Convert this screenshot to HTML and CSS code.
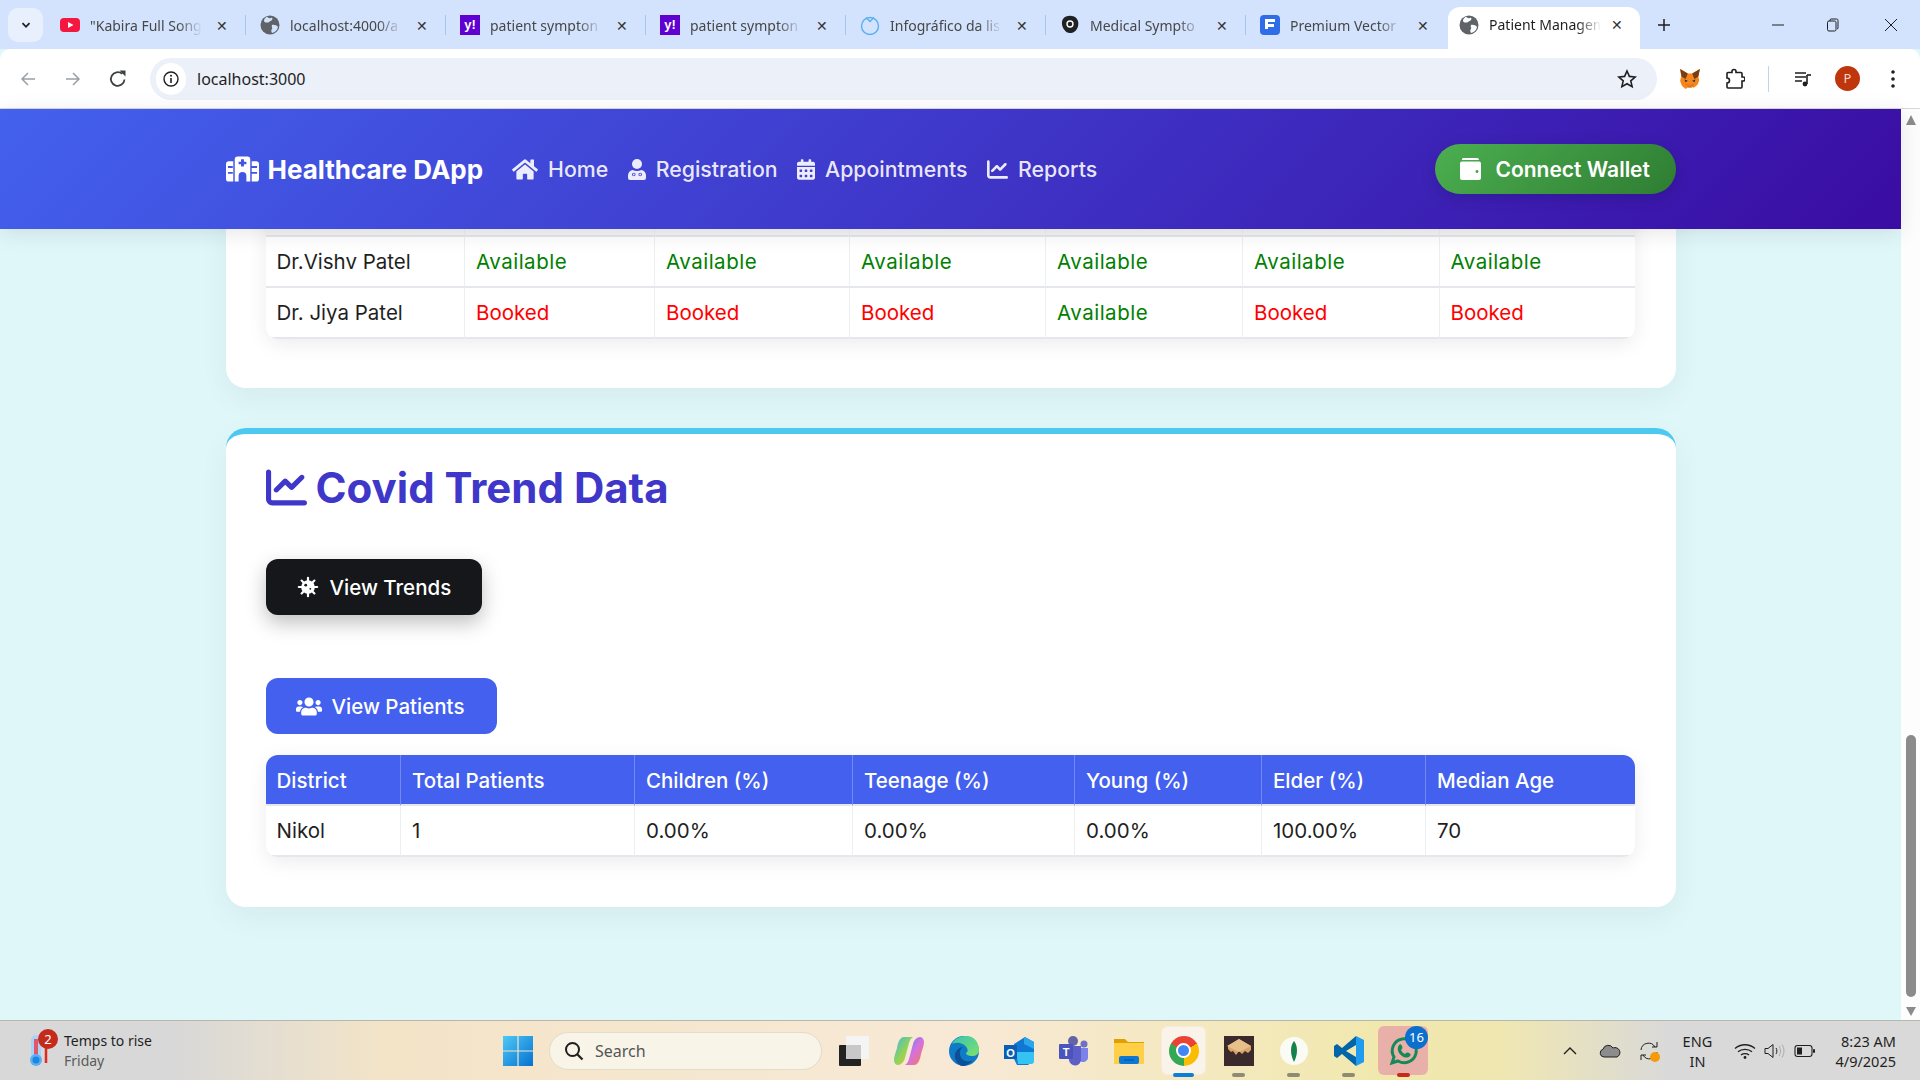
FILE: index.html
```html
<!DOCTYPE html>
<html lang="en">
<head>
  <meta charset="UTF-8" />
  <meta name="viewport" content="width=device-width, initial-scale=1.0" />
  <title>Patient Management</title>
  <link rel="stylesheet" href="styles.css">
</head>
<body>
  <!-- browser tabs -->
  <div class="tabstrip">
    <div class="tab-search"><svg viewBox="0 0 12 12" class="ico-12"><path d="M2.5 4.2 6 7.8l3.5-3.6" fill="none" stroke="#1f1f1f" stroke-width="1.8"/></svg></div>
    <div class="tab">
      <svg viewBox="0 0 20 20" class="favicon"><rect x="0" y="3" width="20" height="14" rx="4" fill="#f4173f"/><path d="M8 7l5.500 3L8 13z" fill="#fff"/></svg>
      <span class="tab-title">"Kabira Full Song</span><span class="tab-x">✕</span>
    </div>
    <div class="tab">
      <svg viewBox="0 0 20 20" class="favicon"><circle cx="10" cy="10" r="9.500" fill="#5f6368"/><path d="M7 1.500c1 2 4 2 5 1 1 1.500 0 3-1.500 3.500S9 8 6 7.500 3.500 4 7 1.500zM12 10c2-.5 5 .5 6 2-.5 3-3 5.500-6 6-1-2-1-3 0-4s-1-2 0-4z" fill="#d3e3fd"/></svg>
      <span class="tab-title">localhost:4000/a</span><span class="tab-x">✕</span>
    </div>
    <div class="tab">
      <span class="favicon yahoo">y!</span>
      <span class="tab-title">patient sympton</span><span class="tab-x">✕</span>
    </div>
    <div class="tab">
      <span class="favicon yahoo">y!</span>
      <span class="tab-title">patient sympton</span><span class="tab-x">✕</span>
    </div>
    <div class="tab">
      <svg viewBox="0 0 20 20" class="favicon"><circle cx="10" cy="11" r="8.500" fill="none" stroke="#5aaef0" stroke-width="1.400"/><path d="M6 2.500l4 4 4-4" fill="none" stroke="#5aaef0" stroke-width="1.400"/></svg>
      <span class="tab-title">Infográfico da lis</span><span class="tab-x">✕</span>
    </div>
    <div class="tab">
      <svg viewBox="0 0 20 20" class="favicon"><path d="M3 4c2-3 7-4 11-2.500 4 2 5 6 4 10-1 3-3 6-7 6.500-3 .5-5-1-6.500-3C2 12 1 7 3 4z" fill="#202124"/><circle cx="10" cy="9" r="3" fill="none" stroke="#fff" stroke-width="1.400"/></svg>
      <span class="tab-title">Medical Sympto</span><span class="tab-x">✕</span>
    </div>
    <div class="tab">
      <svg viewBox="0 0 20 20" class="favicon"><rect width="20" height="20" rx="4" fill="#2f6de8"/><path d="M5 4h10v3H8v2h6v3H8v2H5z" fill="#fff"/></svg>
      <span class="tab-title">Premium Vector</span><span class="tab-x">✕</span>
    </div>
    <div class="tab tab-active">
      <svg viewBox="0 0 20 20" class="favicon"><circle cx="10" cy="10" r="9.500" fill="#5f6368"/><path d="M7 1.500c1 2 4 2 5 1 1 1.500 0 3-1.500 3.500S9 8 6 7.500 3.500 4 7 1.500zM12 10c2-.5 5 .5 6 2-.5 3-3 5.500-6 6-1-2-1-3 0-4s-1-2 0-4z" fill="#fff"/></svg>
      <span class="tab-title">Patient Managem</span><span class="tab-x">✕</span>
    </div>
    <div class="tab-plus"><svg viewBox="0 0 14 14" class="ico-14"><path d="M7 1v12M1 7h12" stroke="#1f1f1f" stroke-width="1.500"/></svg></div>
    <div class="win-controls">
      <svg viewBox="0 0 14 14" class="ico-14"><path d="M1 7h12" stroke="#1f1f1f" stroke-width="1"/></svg>
      <svg viewBox="0 0 14 14" class="ico-14"><rect x="1.500" y="3" width="8.500" height="10" rx="1.500" fill="none" stroke="#1f1f1f"/><path d="M4 3V2.200C4 1.500 4.500 1 5.200 1h5.300c1 0 1.500.5 1.500 1.500V10c0 .6-.4 1-1 1" fill="none" stroke="#1f1f1f"/></svg>
      <svg viewBox="0 0 14 14" class="ico-14"><path d="M1 1l12 12M13 1L1 13" stroke="#1f1f1f" stroke-width="1"/></svg>
    </div>
  </div>

  <!-- address bar -->
  <div class="toolbar">
    <div class="tool-btn"><svg viewBox="0 0 16 16" class="ico-16"><path d="M15 8H2M8 2 2 8l6 6" fill="none" stroke="#9aa0a6" stroke-width="1.500"/></svg></div>
    <div class="tool-btn"><svg viewBox="0 0 16 16" class="ico-16"><path d="M1 8h13M8 2l6 6-6 6" fill="none" stroke="#9aa0a6" stroke-width="1.500"/></svg></div>
    <div class="tool-btn"><svg viewBox="0 0 20 20" class="ico-20"><path d="M16.500 10.500a6.800 6.800 0 1 1-2.300-5.600" fill="none" stroke="#3c4043" stroke-width="1.800"/><path d="M11.500 1.500h6v6z" fill="#3c4043"/></svg></div>
    <div class="addressbar">
      <div class="site-info"><svg viewBox="0 0 16 16" class="ico-16"><circle cx="8" cy="8" r="7" fill="none" stroke="#1f1f1f" stroke-width="1.400"/><path d="M8 7v5" stroke="#1f1f1f" stroke-width="1.600"/><circle cx="8" cy="4.800" r="1" fill="#1f1f1f"/></svg></div>
      <span class="url">localhost:3000</span>
      <svg viewBox="0 0 20 20" class="ico-20 star"><path d="M10 2l2.400 5.400 5.800.6-4.400 3.900 1.300 5.700L10 14.700l-5.100 2.900 1.300-5.700L1.800 8l5.800-.6z" fill="none" stroke="#1f1f1f" stroke-width="1.600"/></svg>
    </div>
    <div class="tool-right">
      <div class="tool-btn"><svg viewBox="0 0 20 20" class="ico-22"><path d="M1 1l7 4h4l7-4-1.500 7 1 3-1.500 4-3.500 3-3-1.500h-1L6 19l-3.500-3L1 11.500l1-3.500z" fill="#f6851b"/><path d="M1 1l7 4-2 5-3.500-2zM19 1l-7 4 2 5 3.500-2z" fill="#763d16"/><path d="M6 14l4 1.500 4-1.500-2.500 4h-3z" fill="#e4761b"/><path d="M5 10.500l3 1-2 1.500zM15 10.500l-3 1 2 1.500z" fill="#233447"/></svg></div>
      <div class="tool-btn"><svg viewBox="0 0 20 22" class="puzzle"><path d="M3 4.500h4V3.500a2 2 0 0 1 4 0v1h5a1 1 0 0 1 1 1V9h1a2 2 0 0 1 0 4h-1v6a1 1 0 0 1-1 1H3a1 1 0 0 1-1-1v-4a2.500 2.500 0 0 0 0-5V5.500a1 1 0 0 1 1-1z" fill="none" stroke="#1f1f1f" stroke-width="1.600"/></svg></div>
      <div class="tool-sep"></div>
      <div class="tool-btn"><svg viewBox="0 0 20 20" class="ico-20"><path d="M2 4h11M2 8h11M2 12h7" stroke="#1f1f1f" stroke-width="1.600"/><path d="M14 6v9" stroke="#1f1f1f" stroke-width="1.600"/><path d="M14 6h4" stroke="#1f1f1f" stroke-width="1.600"/><circle cx="12" cy="15" r="2.400" fill="#1f1f1f"/></svg></div>
      <div class="tool-btn"><span class="avatar">P</span></div>
      <div class="tool-btn"><svg viewBox="0 0 4 18" class="dots"><circle cx="2" cy="2" r="1.800" fill="#1f1f1f"/><circle cx="2" cy="9" r="1.800" fill="#1f1f1f"/><circle cx="2" cy="16" r="1.800" fill="#1f1f1f"/></svg></div>
    </div>
  </div>

  <div class="window">
    <div class="page">
      <nav class="navbar">
        <div class="nav-inner">
          <a class="brand">
            <svg viewBox="0 0 34 26" class="brand-icon"><path fill="#fff" fill-rule="evenodd" d="M12 0h10a3 3 0 0 1 3 3v23h-4v-6a4 4 0 0 0-8 0v6H9V3a3 3 0 0 1 3-3zm3.500 3v2.500H13v2.500h2.500v2.500h3V8H21V5.500h-2.500V3zM3 5h4.500v21H3a3 3 0 0 1-3-3V8a3 3 0 0 1 3-3zm-1 5v2h5v-2zm0 6v2h5v-2zM26.500 5H31a3 3 0 0 1 3 3v15a3 3 0 0 1-3 3h-4.500zm0 5v2h5.500v-2zm0 6v2h5.500v-2z"/></svg>
            <span>Healthcare DApp</span>
          </a>
          <a class="nav-link">
            <svg viewBox="0 0 576 512" class="nav-icon home"><path fill="currentColor" d="M280.370 148.260L96 300.110V464a16 16 0 0 0 16 16l112.060-.29a16 16 0 0 0 15.920-16V368a16 16 0 0 1 16-16h64a16 16 0 0 1 16 16v95.640a16 16 0 0 0 16 16.050L464 480a16 16 0 0 0 16-16V300L295.670 148.260a12.190 12.190 0 0 0-15.300 0zM571.600 251.470L488 182.560V44.050a12 12 0 0 0-12-12h-56a12 12 0 0 0-12 12v72.610L318.470 43a48 48 0 0 0-61 0L4.340 251.470a12 12 0 0 0-1.600 16.900l25.500 31A12 12 0 0 0 45.150 301l235.220-193.740a12.190 12.190 0 0 1 15.300 0L530.900 301a12 12 0 0 0 16.900-1.600l25.500-31a12 12 0 0 0-1.700-16.930z"/></svg>
            <span>Home</span>
          </a>
          <a class="nav-link">
            <svg viewBox="0 0 18 21" class="nav-icon user"><circle cx="9" cy="5" r="5" fill="currentColor"/><path fill="currentColor" fill-rule="evenodd" d="M4.500 11c3 1.300 6 1.300 9 0 3 .5 4.500 3 4.500 5.500V19a2 2 0 0 1-2 2H2a2 2 0 0 1-2-2v-2.500C0 14 1.500 11.500 4.500 11zM4 15.500a1.800 1.800 0 1 0 3.600 0 1.800 1.800 0 1 0-3.600 0zm.9 0a.9.9 0 1 1 1.800 0 .9.900 0 1 1-1.800 0zm5.500 0a1.800 1.800 0 1 0 3.600 0 1.800 1.800 0 1 0-3.600 0zm.9 0a.9.900 0 1 1 1.800 0 .9.900 0 1 1-1.800 0z"/></svg>
            <span>Registration</span>
          </a>
          <a class="nav-link">
            <svg viewBox="0 0 448 512" class="nav-icon cal"><path fill="currentColor" d="M0 464c0 26.500 21.500 48 48 48h352c26.500 0 48-21.500 48-48V192H0v272zm320-196c0-6.600 5.400-12 12-12h40c6.600 0 12 5.400 12 12v40c0 6.600-5.400 12-12 12h-40c-6.600 0-12-5.400-12-12v-40zm0 128c0-6.600 5.400-12 12-12h40c6.600 0 12 5.400 12 12v40c0 6.600-5.400 12-12 12h-40c-6.600 0-12-5.400-12-12v-40zM192 268c0-6.600 5.400-12 12-12h40c6.600 0 12 5.400 12 12v40c0 6.600-5.400 12-12 12h-40c-6.600 0-12-5.400-12-12v-40zm0 128c0-6.600 5.400-12 12-12h40c6.600 0 12 5.400 12 12v40c0 6.600-5.400 12-12 12h-40c-6.600 0-12-5.400-12-12v-40zM64 268c0-6.600 5.400-12 12-12h40c6.600 0 12 5.400 12 12v40c0 6.600-5.400 12-12 12H76c-6.600 0-12-5.400-12-12v-40zm0 128c0-6.600 5.400-12 12-12h40c6.600 0 12 5.400 12 12v40c0 6.600-5.400 12-12 12H76c-6.600 0-12-5.400-12-12v-40zM400 64h-48V16c0-8.800-7.200-16-16-16h-32c-8.800 0-16 7.200-16 16v48H160V16c0-8.800-7.200-16-16-16h-32c-8.800 0-16 7.200-16 16v48H48C21.500 64 0 85.500 0 112v48h448v-48c0-26.500-21.500-48-48-48z"/></svg>
            <span>Appointments</span>
          </a>
          <a class="nav-link">
            <svg viewBox="0 0 512 512" class="nav-icon chart"><path fill="currentColor" d="M64 64c0-17.700-14.300-32-32-32S0 46.300 0 64V400c0 44.200 35.800 80 80 80H480c17.700 0 32-14.300 32-32s-14.300-32-32-32H80c-8.800 0-16-7.200-16-16V64zm406.600 86.600c12.500-12.500 12.500-32.800 0-45.300s-32.800-12.500-45.300 0L320 210.700l-57.400-57.400c-12.500-12.500-32.800-12.500-45.300 0l-112 112c-12.500 12.500-12.500 32.800 0 45.300s32.800 12.500 45.300 0L240 221.300l57.400 57.400c12.500 12.500 32.800 12.500 45.300 0l128-128z"/></svg>
            <span>Reports</span>
          </a>
          <button class="wallet-btn">
            <svg viewBox="0 0 21 22" class="wallet-icon"><path fill="#fff" fill-rule="evenodd" d="M3 0h14a2 2 0 0 1 2 2H2a2 2 0 0 1 1-2zM2 3.500h17a2 2 0 0 1 2 2V20a2 2 0 0 1-2 2H2a2 2 0 0 1-2-2V5.500a2 2 0 0 1 2-2zM17 12a1.500 1.500 0 1 0 .01 0z"/></svg>
            <span>Connect Wallet</span>
          </button>
        </div>
      </nav>

      <main class="content">
        <section class="card card-clipped">
          <table class="data-table schedule">
            <colgroup><col><col><col><col><col><col><col></colgroup>
            <tbody>
              <tr class="row-cut"><td></td><td></td><td></td><td></td><td></td><td></td><td></td></tr>
              <tr>
                <td>Dr.Vishv Patel</td>
                <td class="free">Available</td><td class="free">Available</td><td class="free">Available</td>
                <td class="free">Available</td><td class="free">Available</td><td class="free">Available</td>
              </tr>
              <tr>
                <td>Dr. Jiya Patel</td>
                <td class="taken">Booked</td><td class="taken">Booked</td><td class="taken">Booked</td>
                <td class="free">Available</td><td class="taken">Booked</td><td class="taken">Booked</td>
              </tr>
            </tbody>
          </table>
        </section>

        <section class="card card-accent">
          <h2 class="card-title">
            <svg viewBox="0 0 512 512" class="title-icon"><path fill="currentColor" d="M64 64c0-17.700-14.300-32-32-32S0 46.300 0 64V400c0 44.200 35.800 80 80 80H480c17.700 0 32-14.300 32-32s-14.300-32-32-32H80c-8.800 0-16-7.200-16-16V64zm406.600 86.600c12.500-12.500 12.500-32.800 0-45.300s-32.800-12.500-45.300 0L320 210.700l-57.400-57.400c-12.500-12.500-32.800-12.500-45.300 0l-112 112c-12.500 12.500-12.500 32.800 0 45.300s32.800 12.500 45.300 0L240 221.300l57.400 57.400c12.500 12.500 32.800 12.500 45.300 0l128-128z"/></svg>
            <span>Covid Trend Data</span>
          </h2>
          <button class="btn btn-dark">
            <svg viewBox="0 0 24 24" class="virus-icon">
              <g stroke="#fff" stroke-width="2.400" stroke-linecap="round"><path d="M12 2v20M2 12h20M5 5l14 14M19 5 5 19"/></g>
              <circle cx="12" cy="12" r="7.500" fill="#fff"/>
              <circle cx="9.500" cy="10" r="1.500" fill="#16171b"/><circle cx="14.500" cy="14" r="1" fill="#16171b"/>
            </svg>
            <span>View Trends</span>
          </button>
          <button class="btn btn-blue">
            <svg viewBox="0 0 640 512" class="users-icon"><path fill="#fff" d="M96 224c35.300 0 64-28.700 64-64s-28.700-64-64-64-64 28.700-64 64 28.700 64 64 64zm448 0c35.300 0 64-28.700 64-64s-28.700-64-64-64-64 28.700-64 64 28.700 64 64 64zm32 32h-64c-17.600 0-33.500 7.100-45.100 18.600 40.300 22.100 68.900 62 75.100 109.400h66c17.700 0 32-14.300 32-32v-32c0-35.300-28.700-64-64-64zm-256 0c61.900 0 112-50.100 112-112S381.900 32 320 32 208 82.100 208 144s50.100 112 112 112zm76.800 32h-8.300c-20.800 10-43.900 16-68.500 16s-47.600-6-68.500-16h-8.300C179.600 288 128 339.600 128 403.200V432c0 26.500 21.500 48 48 48h288c26.500 0 48-21.500 48-48v-28.800c0-63.600-51.600-115.200-115.200-115.200zm-223.700-13.400C161.500 263.100 145.600 256 128 256H64c-35.300 0-64 28.700-64 64v32c0 17.700 14.300 32 32 32h65.900c6.300-47.400 34.900-87.300 75.200-109.400z"/></svg>
            <span>View Patients</span>
          </button>
          <table class="data-table trends">
            <colgroup><col><col><col><col><col><col><col></colgroup>
            <thead>
              <tr><th>District</th><th>Total Patients</th><th>Children (%)</th><th>Teenage (%)</th><th>Young (%)</th><th>Elder (%)</th><th>Median Age</th></tr>
            </thead>
            <tbody>
              <tr><td>Nikol</td><td>1</td><td>0.00%</td><td>0.00%</td><td>0.00%</td><td>100.00%</td><td>70</td></tr>
            </tbody>
          </table>
        </section>
      </main>
    </div>

    <div class="scrollbar">
      <div class="arrow-up"></div>
      <div class="thumb"></div>
      <div class="arrow-down"></div>
    </div>
  </div>

  <!-- windows taskbar -->
  <footer class="taskbar">
    <div class="weather">
      <svg viewBox="0 0 24 36" class="thermo">
        <rect x="3" y="2" width="10" height="26" rx="5" fill="#a9d4f5"/>
        <rect x="6" y="6" width="4" height="20" fill="#e0566a"/>
        <circle cx="8" cy="27" r="6" fill="#5ab0f0"/><circle cx="8" cy="27" r="3.500" fill="#1c86e0"/>
        <path d="M18 12v18" stroke="#e02a1f" stroke-width="2.500"/>
      </svg>
      <span class="weather-badge">2</span>
      <div class="weather-text"><span>Temps to rise</span><span class="weather-day">Friday</span></div>
    </div>

    <div class="task-group">
      <svg viewBox="0 0 30 30" class="win-logo">
        <defs><linearGradient id="winGrad" x1="0" y1="0" x2="1" y2="1"><stop offset="0" stop-color="#4fc8f7"/><stop offset="1" stop-color="#0571d0"/></linearGradient></defs>
        <path fill="url(#winGrad)" d="M0 0h14.400v14.400H0zM15.600 0H30v14.400H15.600zM0 15.600h14.400V30H0zM15.600 15.600H30V30H15.600z"/>
      </svg>
      <div class="search-box">
        <svg viewBox="0 0 20 20" class="ico-20"><circle cx="8.500" cy="8.500" r="6.500" fill="none" stroke="#1f1f1f" stroke-width="2"/><path d="M13 13l5.500 5.500" stroke="#1f1f1f" stroke-width="2.200"/></svg>
        <span>Search</span>
      </div>
      <div class="task-item">
        <svg viewBox="0 0 30 30" class="app-icon"><rect x="7" y="0" width="23" height="23" rx="1" fill="#f4f4f4"/><rect x="0" y="9" width="22" height="21" rx="1" fill="#222"/><rect x="7" y="9" width="15" height="14" fill="#c8c8c8"/></svg>
      </div>
      <div class="task-item">
        <svg viewBox="0 0 30 30" class="app-icon">
          <defs><linearGradient id="copA" x1="0" y1="0" x2="1" y2="1"><stop offset="0" stop-color="#3fb6e8"/><stop offset=".5" stop-color="#8ed35b"/><stop offset="1" stop-color="#f4c430"/></linearGradient><linearGradient id="copB" x1="0" y1="0" x2="1" y2="1"><stop offset="0" stop-color="#3c8ef0"/><stop offset=".5" stop-color="#d670e0"/><stop offset="1" stop-color="#f47b4c"/></linearGradient></defs>
          <path fill="url(#copA)" d="M10 1h9c-2 1-3 3-4 6l-4 15c-1 4-4 7-7 7-2 0-4-2-4-5 0-4 2-8 3-12C4 6 6 1 10 1z"/>
          <path fill="url(#copB)" d="M20 29h-9c2-1 3-3 4-6l4-15c1-4 4-7 7-7 2 0 4 2 4 5 0 4-2 8-3 12-1 6-3 11-7 11z"/>
        </svg>
      </div>
      <div class="task-item">
        <svg viewBox="0 0 30 30" class="app-icon">
          <defs><linearGradient id="edgeA" x1="0" y1="0" x2="1" y2="1"><stop offset="0" stop-color="#36c6b0"/><stop offset="1" stop-color="#7fe06a"/></linearGradient></defs>
          <circle cx="15" cy="15" r="15" fill="#0f7bc6"/>
          <path fill="url(#edgeA)" d="M3 8C6 2 12 0 17 0c8 0 13 6 13 14 0 4-3 6-7 6-3 0-6-1-6-3 2-1 2-3 1-5-2-4-9-7-15-4z"/>
          <path fill="#0c4f96" d="M24 24c-3 4-7 6-11 6 -4-1-8-6-7-12 1-4 5-7 8-7-4 3-4 8-1 12 3 3 8 3 11 1z"/>
        </svg>
      </div>
      <div class="task-item">
        <svg viewBox="0 0 30 30" class="app-icon"><path fill="#0f78d4" d="M10 8l11-7 9 5v18l-6 5H13l-3-6z"/><path fill="#2aa6ea" d="M20 1l10 5v7l-10-5z"/><path fill="#35c3f3" d="M12 16h18v9a3 3 0 0 1-3 3H14z"/><rect x="0" y="9" width="13" height="14" fill="#0a5fb4"/><text x="6.500" y="20.500" class="mini-letter">O</text></svg>
      </div>
      <div class="task-item">
        <svg viewBox="0 0 30 30" class="app-icon"><circle cx="14" cy="5" r="5" fill="#6264a7"/><circle cx="25" cy="8" r="3.500" fill="#6d70c4"/><path fill="#7b83eb" d="M19 12h10v10a5 5 0 0 1-8 3z"/><path fill="#5b5fc7" d="M8 10h14v13a6 6 0 0 1-12 1z"/><rect x="0" y="8" width="14" height="15" rx="1" fill="#4b53bc"/><text x="7" y="20" class="mini-letter">T</text></svg>
      </div>
      <div class="task-item">
        <svg viewBox="0 0 30 30" class="app-icon"><path fill="#e0a100" d="M0 3h11l3 3h16v6H0z"/><path fill="#ffcf48" d="M0 7h30v21H0z"/><rect x="5" y="20" width="20" height="8" rx="2" fill="#0f78d4"/><path d="M10 24h10" stroke="#0a4f96" stroke-width="1"/></svg>
      </div>
      <div class="task-item task-active">
        <span class="active-bg"></span>
        <span class="chrome"><span class="chrome-dot"></span></span>
        <span class="indicator ind-blue"></span>
      </div>
      <div class="task-item">
        <svg viewBox="0 0 30 30" class="app-icon"><rect width="30" height="30" fill="#3a2a2c"/><path fill="#d9a569" d="M15 3l12 7v4l-3 3-3-2-3 3-3-3-3 4-3-4-2 1-3-3v-3z"/><path fill="#e8c08a" d="M15 3l12 7-12 6-12-6z"/></svg>
        <span class="indicator"></span>
      </div>
      <div class="task-item">
        <svg viewBox="0 0 30 30" class="app-icon"><circle cx="15" cy="15" r="14" fill="#fbfbf5"/><path fill="#13814a" d="M15 5c4 5 4 13 0 21-4-8-4-16 0-21z"/></svg>
        <span class="indicator"></span>
      </div>
      <div class="task-item">
        <svg viewBox="0 0 30 30" class="app-icon"><path fill="#1f9cf0" d="M22 0l8 4v22l-8 4z"/><path fill="#0065a9" d="M22 0v9L12 15l10 6v9L8 18l-5 4-3-2v-10l3-2 5 4z"/></svg>
        <span class="indicator"></span>
      </div>
      <div class="task-item task-alert">
        <span class="alert-bg"></span>
        <svg viewBox="0 0 30 30" class="app-icon"><path fill="none" stroke="#148a5a" stroke-width="3" d="M3 27l2-6A12 12 0 1 1 9 25z"/><path fill="#148a5a" d="M10 9c1-1 2-1 3 1s0 3-1 4c1 2 2 3 4 4 1-1 2-2 4-1s2 2 1 3c-2 2-5 2-8 0s-6-7-3-11z"/></svg>
        <span class="wa-badge">16</span>
        <span class="indicator ind-red"></span>
      </div>
    </div>

    <div class="tray">
      <svg viewBox="0 0 14 8" class="tray-chevron"><path d="M1 7l6-6 6 6" fill="none" stroke="#1f1f1f" stroke-width="1.400"/></svg>
      <svg viewBox="0 0 22 14" class="tray-cloud"><path fill="#8c8c8c" stroke="#1f1f1f" d="M5 13a4 4 0 0 1-1-7.800A5.500 5.500 0 0 1 14 4a4.500 4.500 0 0 1 4 9z"/></svg>
      <div class="tray-sync">
        <svg viewBox="0 0 20 20" class="ico-20"><path d="M2 9a7.500 7.500 0 0 1 14-3M18 1v5h-5M18 11a7.500 7.500 0 0 1-14 3M2 19v-5h5" fill="none" stroke="#1f1f1f" stroke-width="1"/></svg>
        <span class="sync-dot"></span>
      </div>
      <div class="tray-lang"><span>ENG</span><span>IN</span></div>
      <svg viewBox="0 0 22 16" class="tray-wifi"><path d="M1 5.500c5.500-5 14.500-5 20 0M4 8.800c3.800-3.300 10.200-3.300 14 0M7 12c2.200-1.800 5.800-1.800 8 0" fill="none" stroke="#1f1f1f" stroke-width="1.300"/><circle cx="11" cy="14.500" r="1.400" fill="#1f1f1f"/></svg>
      <svg viewBox="0 0 22 16" class="tray-sound"><path d="M1 5.500h3L9 1.500v13l-5-4H1z" fill="none" stroke="#1f1f1f" stroke-width="1"/><path d="M12 5c1.200 1.800 1.200 4.200 0 6" fill="none" stroke="#1f1f1f"/><path d="M15 3c2 3 2 7 0 10M18 1.500c2.600 4 2.600 9 0 13" fill="none" stroke="#aaa"/></svg>
      <svg viewBox="0 0 22 14" class="tray-batt"><rect x="1" y="1.500" width="17" height="11" rx="2.500" fill="none" stroke="#1f1f1f" stroke-width="1.100"/><rect x="3" y="3.500" width="5" height="7" fill="#1f1f1f"/><rect x="19" y="5" width="2" height="4" rx="1" fill="#1f1f1f"/></svg>
      <div class="tray-clock"><span>8:23 AM</span><span>4/9/2025</span></div>
    </div>
  </footer>
</body>
</html>
```

FILE: styles.css
```css
* {
  box-sizing: border-box;
}

html, body {
  height: 100%;
}

body {
  margin: 0;
  display: flex;
  flex-direction: column;
  overflow: hidden;
  font-family: "Noto Sans", sans-serif;
  color: #1f1f1f;
  background: #e0f7fa;
}

.ico-12 { width: 12px; height: 12px; }
.ico-14 { width: 14px; height: 14px; }
.ico-16 { width: 16px; height: 16px; }
.ico-20 { width: 20px; height: 20px; }
.ico-22 { width: 22px; height: 22px; }

/* browser tabs */
.tabstrip {
  height: 49px;
  flex: none;
  display: flex;
  align-items: flex-end;
  background: #d3e3fd;
}

.tab-search {
  width: 35px;
  height: 34px;
  margin: 0 3px 7px 8px;
  display: flex;
  align-items: center;
  justify-content: center;
  border-radius: 10px;
  background: #e9f0fd;
}

.tab {
  width: 200px;
  height: 20px;
  margin-bottom: 14px;
  padding: 0 16px 0 14px;
  display: flex;
  align-items: center;
  border-right: 1px solid #a9c4ee;
  font-size: 14px;
  color: #474747;
}

.tab:nth-child(8) {
  border-right: none;
}

.tab-active {
  width: 192px;
  height: 42px;
  margin-bottom: 0;
  margin-left: 2px;
  padding: 0 16px 7px 11px;
  border: none;
  border-radius: 12px 12px 0 0;
  background: #fff;
  color: #1f1f1f;
}

.favicon {
  width: 20px;
  height: 20px;
  flex: none;
  margin-right: 10px;
}

.yahoo {
  display: block;
  background: #5f01d1;
  color: #fff;
  font: bold 13px/19px "Liberation Sans", sans-serif;
  text-align: center;
}

/* titles fade out before the close button, as chrome does */
.tab-title {
  flex: 1;
  min-width: 0;
  white-space: nowrap;
  -webkit-mask-image: linear-gradient(90deg, #000 88px, transparent 112px);
  mask-image: linear-gradient(90deg, #000 88px, transparent 112px);
}

.tab-x {
  width: 14px;
  margin-left: 5px;
  font-size: 14px;
  text-align: center;
  color: #333;
}

.tab-plus {
  width: 30px;
  height: 34px;
  margin: 0 0 7px 9px;
  display: flex;
  align-items: center;
  justify-content: center;
}

.win-controls {
  margin-left: auto;
  margin-right: 22px;
  margin-bottom: 17px;
  display: flex;
  gap: 44px;
}

.win-controls svg:first-child {
  margin-right: -3px;
}

/* toolbar */
.toolbar {
  height: 60px;
  flex: none;
  padding-left: 5px;
  display: flex;
  align-items: center;
  background: #fff;
  border-bottom: 1px solid #d9d9d9;
  border-radius: 10px 10px 0 0;
  box-shadow: 0 0 0 #d3e3fd;
}

.tool-btn {
  width: 45px;
  height: 42px;
  display: flex;
  align-items: center;
  justify-content: center;
}

.addressbar {
  width: 1507px;
  height: 42px;
  margin-left: 10px;
  padding-left: 6px;
  display: flex;
  align-items: center;
  border-radius: 21px;
  background: #ebf0f9;
}

.site-info {
  width: 30px;
  height: 32px;
  display: flex;
  align-items: center;
  justify-content: center;
  border-radius: 16px;
  background: #fff;
}

.url {
  margin-left: 11px;
  font-size: 16px;
}

.star {
  margin-left: auto;
  margin-right: 20px;
}

.puzzle {
  width: 20px;
  height: 22px;
}

.tool-right {
  margin-left: 10px;
  display: flex;
  align-items: center;
}

.tool-sep {
  width: 23px;
  height: 26px;
  background: linear-gradient(#c6d4ea, #c6d4ea) center / 1px 100% no-repeat;
}

.avatar {
  width: 25px;
  height: 25px;
  border-radius: 50%;
  background: #bf360c;
  color: #f5d9cf;
  font-size: 13px;
  line-height: 25px;
  text-align: center;
}

.dots {
  width: 4px;
  height: 18px;
}

/* page area */
.window {
  flex: 1;
  min-height: 0;
  display: flex;
}

.page {
  flex: 1;
  min-width: 0;
  display: flex;
  flex-direction: column;
  font-family: Inter, sans-serif;
}

.navbar {
  height: 120px;
  flex: none;
  position: relative;
  z-index: 2;
  background: linear-gradient(135deg, #4361ee, #3a0ca3);
  box-shadow: 0 4px 20px rgba(0, 0, 0, 0.1);
}

.nav-inner {
  max-width: 1450px;
  height: 100%;
  margin: 0 auto;
  display: flex;
  align-items: center;
}

.brand {
  display: flex;
  align-items: center;
  gap: 9px;
  margin-right: 29px;
  font-size: 26px;
  font-weight: 700;
  color: #fff;
}

.brand-icon {
  width: 33px;
  height: 26px;
}

.nav-link {
  display: flex;
  align-items: center;
  gap: 10px;
  margin-right: 19.5px;
  font-size: 21.3px;
  font-weight: 500;
  color: rgba(255, 255, 255, 0.9);
}

.nav-icon.home { width: 26px; height: 23px; }
.nav-icon.user { width: 18px; height: 21px; }
.nav-icon.cal { width: 18px; height: 21px; }
.nav-icon.chart { width: 21px; height: 21px; }

.wallet-btn {
  width: 241px;
  height: 50px;
  margin-left: auto;
  padding: 0 0 0 25px;
  display: flex;
  align-items: center;
  gap: 15px;
  border: none;
  border-radius: 25px;
  background: linear-gradient(135deg, #4caf50, #2e7d32);
  box-shadow: 0 4px 15px rgba(0, 0, 0, 0.15);
  font-family: Inter, sans-serif;
  font-size: 21px;
  font-weight: 600;
  color: #fff;
}

.wallet-icon {
  width: 21px;
  height: 22px;
}

.content {
  flex: 1;
  min-height: 0;
  overflow: hidden;
  padding: 0 0 40px;
}

.card {
  max-width: 1450px;
  margin: 0 auto 40px;
  padding: 40px;
  border-radius: 20px;
  background: #fff;
  box-shadow: 0 10px 30px rgba(0, 0, 0, 0.05);
}

/* scrolled underneath the navbar */
.card-clipped {
  margin-top: -83px;
  padding-top: 40px;
  padding-bottom: 49px;
}

.card-accent {
  padding: 22px 40px 50px;
  border-top: 6px solid #4cc9f0;
}

.card-title {
  height: 62px;
  margin: 0 0 41px;
  display: flex;
  align-items: center;
  gap: 9px;
  font-size: 42px;
  font-weight: 700;
  color: #3f37c9;
}

.title-icon {
  width: 41px;
  height: 41px;
}

.btn {
  height: 56px;
  padding-top: 1px;
  display: flex;
  align-items: center;
  border: none;
  border-radius: 12px;
  font-family: Inter, sans-serif;
  font-size: 20.5px;
  font-weight: 500;
  color: #fff;
}

.btn-dark {
  width: 216px;
  padding-left: 31px;
  gap: 11px;
  margin-bottom: 63px;
  background: #16171b;
  box-shadow: 0 8px 20px rgba(0, 0, 0, 0.25);
}

.btn-blue {
  width: 231px;
  padding-left: 30px;
  gap: 10px;
  margin-bottom: 21px;
  background: #4361ee;
}

.virus-icon {
  width: 22px;
  height: 22px;
}

.users-icon {
  width: 26px;
  height: 21px;
}

.data-table {
  width: 1369px;
  table-layout: fixed;
  border-collapse: separate;
  border-spacing: 0;
  overflow: hidden;
  border-radius: 12px;
  box-shadow: 0 5px 20px rgba(0, 0, 0, 0.08);
  font-size: 20.5px;
}

.data-table td,
.data-table th {
  height: 51px;
  padding: 0 10px 0 11px;
  border-bottom: 2px solid #e4e7ec;
  border-right: 1px solid #eceef2;
  text-align: left;
  font-weight: 400;
  white-space: nowrap;
}

.data-table td:last-child,
.data-table th:last-child {
  border-right: none;
}

.data-table th {
  padding-top: 2px;
  background: #4361ee;
  border-right-color: rgba(255, 255, 255, 0.25);
  color: #fff;
  font-weight: 500;
}

.row-cut td {
  background: #f5f5f5;
}

.free {
  color: #008000;
  letter-spacing: 0.5px;
}

.taken {
  color: #ff0000;
}

.schedule col:nth-child(1) { width: 199.5px; }
.schedule col:nth-child(2) { width: 190px; }
.schedule col:nth-child(3) { width: 195px; }
.schedule col:nth-child(4) { width: 196px; }
.schedule col:nth-child(5) { width: 197px; }
.schedule col:nth-child(6) { width: 196.5px; }

.trends col:nth-child(1) { width: 135.5px; }
.trends col:nth-child(2) { width: 234px; }
.trends col:nth-child(3) { width: 218px; }
.trends col:nth-child(4) { width: 222px; }
.trends col:nth-child(5) { width: 187px; }
.trends col:nth-child(6) { width: 164px; }

.scrollbar {
  width: 19px;
  flex: none;
  padding: 6px 0 4px;
  display: flex;
  flex-direction: column;
  align-items: center;
  background: #fdfdfd;
}

.arrow-up,
.arrow-down {
  width: 0;
  height: 0;
  border-left: 5.5px solid transparent;
  border-right: 5.5px solid transparent;
}

.arrow-up { border-bottom: 10px solid #8b8b8b; }
.arrow-down { border-top: 9px solid #8b8b8b; }

.thumb {
  width: 10px;
  height: 262px;
  margin: auto 0 10px;
  border-radius: 5px;
  background: #8b8b8b;
}

/* windows taskbar */
.taskbar {
  height: 60px;
  flex: none;
  display: flex;
  align-items: center;
  border-top: 1px solid #b9b6ac;
  background: linear-gradient(90deg, #d8d8d8 0, #d8d8d8 9%, #f3e4c8 20%, #f8e9d6 50%, #f1e8ae 72%, #f0e7b0 78%, #d9d9d9 87%);
}

.weather {
  width: 503px;
  padding-left: 28px;
  display: flex;
  align-items: center;
  position: relative;
}

.thermo {
  width: 24px;
  height: 36px;
}

.weather-badge {
  position: absolute;
  left: 38px;
  top: -2px;
  width: 20px;
  height: 20px;
  border-radius: 50%;
  background: #c42b1c;
  color: #fff;
  font-size: 13px;
  line-height: 20px;
  text-align: center;
}

.weather-text {
  margin-left: 12px;
  display: flex;
  flex-direction: column;
  font-size: 14px;
  line-height: 20px;
}

.weather-day {
  color: #5b5b5b;
}

.task-group {
  display: flex;
  align-items: center;
}

.win-logo {
  width: 30px;
  height: 30px;
  margin-right: 16px;
}

.search-box {
  width: 273px;
  height: 38px;
  margin-right: 4px;
  padding-left: 14px;
  display: flex;
  align-items: center;
  gap: 11px;
  border: 1px solid #e2dcc8;
  border-radius: 19px;
  background: #f8f4e8;
  font-size: 16px;
  color: #555;
}

.task-item {
  width: 55px;
  height: 59px;
  position: relative;
  display: flex;
  align-items: center;
  justify-content: center;
}

.app-icon {
  width: 30px;
  height: 30px;
  position: relative;
}

.mini-letter {
  font: bold 11px "Liberation Sans", sans-serif;
  fill: #fff;
  text-anchor: middle;
}

.active-bg {
  position: absolute;
  left: 5px;
  right: 5px;
  top: 5px;
  bottom: 5px;
  border: 1px solid #f4ecdd;
  border-radius: 6px;
  background: #faf3ea;
}

.chrome {
  width: 30px;
  height: 30px;
  position: relative;
  display: flex;
  align-items: center;
  justify-content: center;
  border-radius: 50%;
  background: conic-gradient(from -60deg, #ea4335 0 120deg, #fbbc04 120deg 240deg, #34a853 240deg 360deg);
}

.chrome-dot {
  width: 15px;
  height: 15px;
  border: 2px solid #fff;
  border-radius: 50%;
  background: #4285f4;
}

.indicator {
  position: absolute;
  left: 21px;
  bottom: 3px;
  width: 13px;
  height: 4px;
  border-radius: 2px;
  background: #8e8b74;
}

.ind-blue {
  left: 17px;
  width: 21px;
  background: #0b7fd6;
}

.ind-red {
  background: #c42b1c;
}

.alert-bg {
  position: absolute;
  left: 2px;
  right: 3px;
  top: 5px;
  bottom: 5px;
  border-radius: 6px;
  background: #e8b0a8;
}

.wa-badge {
  position: absolute;
  left: 29px;
  top: 5px;
  width: 23px;
  height: 23px;
  border-radius: 50%;
  background: #0b6fce;
  color: #fff;
  font-size: 13px;
  line-height: 23px;
  text-align: center;
}

.tray {
  flex: 1;
  padding-right: 24px;
  display: flex;
  align-items: center;
  justify-content: flex-end;
  font-size: 14.5px;
}

.tray-chevron { width: 14px; height: 8px; margin-right: 22px; }
.tray-cloud { width: 22px; height: 14px; margin-right: 18px; }

.tray-sync {
  position: relative;
  width: 20px;
  height: 20px;
  margin-right: 21px;
}

.sync-dot {
  position: absolute;
  right: -1px;
  bottom: -1px;
  width: 10px;
  height: 10px;
  border-radius: 50%;
  background: #f59a0c;
}

.tray-lang {
  width: 34px;
  margin-right: 20px;
  display: flex;
  flex-direction: column;
  align-items: center;
  line-height: 20px;
}

.tray-wifi { width: 22px; height: 16px; margin-right: 8px; }
.tray-sound { width: 22px; height: 16px; margin-right: 8px; }
.tray-batt { width: 22px; height: 14px; margin-right: 19px; }

.tray-clock {
  display: flex;
  flex-direction: column;
  align-items: flex-end;
  line-height: 20px;
}
```
